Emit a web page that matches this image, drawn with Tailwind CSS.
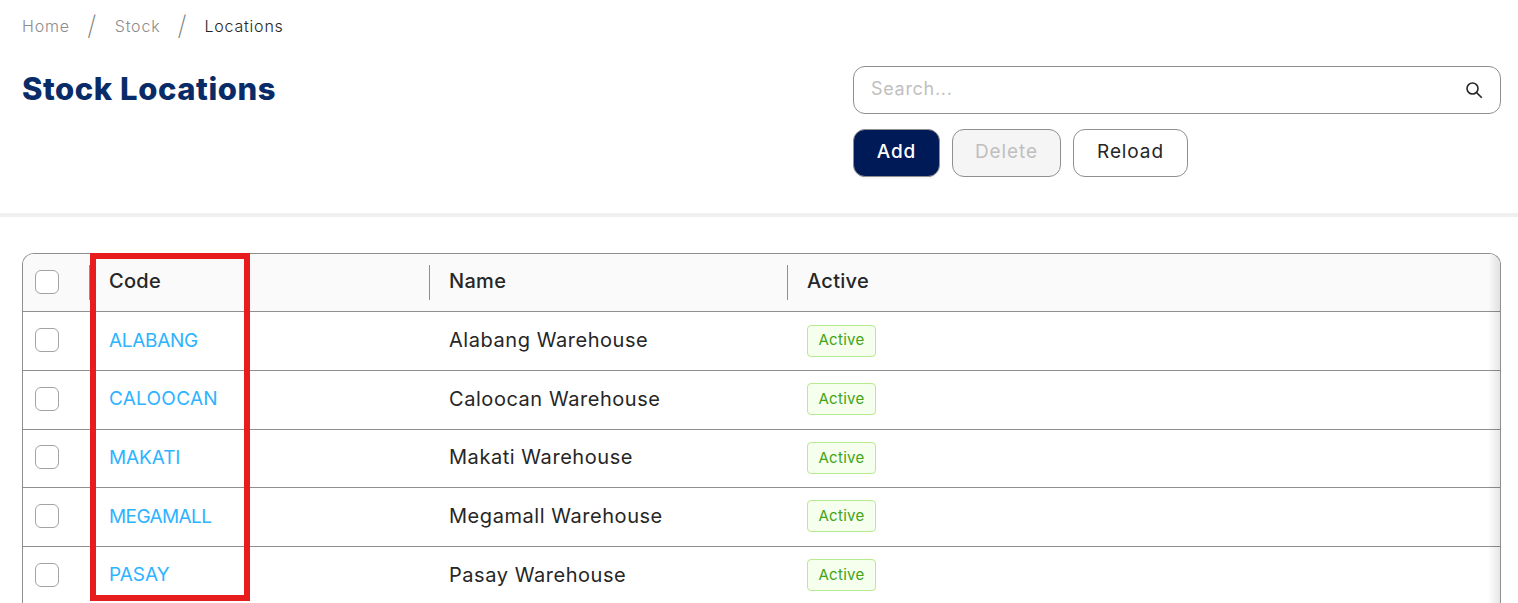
<!DOCTYPE html>
<html lang="en">
<head>
    <meta charset="UTF-8">
    <title>Stock Locations</title>
    <script src="https://cdn.jsdelivr.net/npm/@tailwindcss/browser@4"></script>
</head>
<body class="bg-white font-['Inter',sans-serif] text-[#262626] h-[603px] overflow-hidden relative">

    <!-- page header -->
    <header class="h-[217px] border-b-4 border-[#f0f0f0] px-[22px] pt-[14px]">
        <nav class="flex items-center h-6 text-[16px] font-light tracking-[0.8px]">
            <span class="text-[#8c8c8c]">Home</span>
            <span class="text-[#7f7f7f] text-[27px] font-extralight w-[45px] text-center">/</span>
            <span class="text-[#8c8c8c]">Stock</span>
            <span class="text-[#7f7f7f] text-[27px] font-extralight w-[44px] text-center">/</span>
            <span>Locations</span>
        </nav>
        <div class="flex justify-between mt-[28px]">
            <h1 class="text-[31px] leading-[46px] font-extrabold text-[#092c69] tracking-[0.55px]">Stock Locations</h1>
            <div class="w-[648px] mr-[-5px]">
                <div class="h-12 border border-[#8f8f8f] rounded-[12px] flex items-center justify-between pl-[17px] pr-[17px]">
                    <span class="text-[#bfbfbf] text-[18px] tracking-[0.7px] -mt-1">Search...</span>
                    <svg class="w-[18px] h-[18px] text-[#262626]" viewBox="0 0 18 18" fill="none" stroke="currentColor" stroke-width="1.6">
                        <circle cx="7.5" cy="7.5" r="5.5"></circle>
                        <path d="M11.6 11.6 L16.8 16.8"></path>
                    </svg>
                </div>
                <div class="flex gap-3 mt-[15px] text-[19px] tracking-[0.9px] leading-[26px]">
                    <button class="w-[87px] h-12 pb-[2px] rounded-[12px] bg-[#001a57] border border-[#8f8f8f] text-white font-medium shadow-[0_2px_0_rgba(0,0,0,0.03)]">Add</button>
                    <button class="w-[109px] h-12 pb-[2px] rounded-[12px] bg-[#f5f5f5] border border-[#8f8f8f] text-[#bfbfbf]">Delete</button>
                    <button class="w-[115px] h-12 pb-[2px] rounded-[12px] bg-white border border-[#8f8f8f]">Reload</button>
                </div>
            </div>
        </div>
    </header>

    <!-- table -->
    <div class="relative mt-9 ml-[22px] w-[1479px] border border-b-0 border-[#8f8f8f] rounded-t-[12px] overflow-hidden text-[20px] tracking-[0.55px]">
        <div class="grid grid-cols-[66px_340px_358px_1fr] items-center h-[58.4px] bg-[#fafafa] border-b border-[#8f8f8f] font-medium tracking-[0.3px]">
            <div class="pl-3 pb-[2px]"><span class="block w-6 h-6 bg-white border border-[#a3a3a3] rounded-[6px]"></span></div>
            <div class="h-[35px] border-l border-[#8f8f8f] pl-[19px] pb-[3px] flex items-center">Code</div>
            <div class="h-[35px] border-l border-[#8f8f8f] pl-[19px] pb-[3px] flex items-center">Name</div>
            <div class="h-[35px] border-l border-[#8f8f8f] pl-[19px] pb-[3px] flex items-center">Active</div>
        </div>

        <div class="grid grid-cols-[66px_340px_358px_1fr] items-center h-[58.6px] border-b border-[#8f8f8f]">
            <div class="pl-3 pb-[2px]"><span class="block w-6 h-6 bg-white border border-[#a3a3a3] rounded-[6px]"></span></div>
            <div class="pl-5 text-[19px] tracking-[-0.3px] text-[#2db3ff]">ALABANG</div>
            <div class="pl-5 pb-[2px]">Alabang Warehouse</div>
            <div class="pl-5 pb-[1px] flex"><span class="inline-flex items-center justify-center w-[69px] h-[32px] rounded-[4px] bg-[#f6ffed] border border-[#b7eb8f] text-[#3fa516] text-[15px] tracking-[0.3px]">Active</span></div>
        </div>
        <div class="grid grid-cols-[66px_340px_358px_1fr] items-center h-[58.6px] border-b border-[#8f8f8f]">
            <div class="pl-3 pb-[2px]"><span class="block w-6 h-6 bg-white border border-[#a3a3a3] rounded-[6px]"></span></div>
            <div class="pl-5 pb-[2px] text-[19px] tracking-[0.25px] text-[#2db3ff]">CALOOCAN</div>
            <div class="pl-5 pb-[2px]">Caloocan Warehouse</div>
            <div class="pl-5 pb-[1px] flex"><span class="inline-flex items-center justify-center w-[69px] h-[32px] rounded-[4px] bg-[#f6ffed] border border-[#b7eb8f] text-[#3fa516] text-[15px] tracking-[0.3px]">Active</span></div>
        </div>
        <div class="grid grid-cols-[66px_340px_358px_1fr] items-center h-[58.6px] border-b border-[#8f8f8f]">
            <div class="pl-3 pb-[2px]"><span class="block w-6 h-6 bg-white border border-[#a3a3a3] rounded-[6px]"></span></div>
            <div class="pl-5 text-[19px] tracking-[-0.1px] text-[#2db3ff]">MAKATI</div>
            <div class="pl-5 pb-[2px]">Makati Warehouse</div>
            <div class="pl-5 pb-[1px] flex"><span class="inline-flex items-center justify-center w-[69px] h-[32px] rounded-[4px] bg-[#f6ffed] border border-[#b7eb8f] text-[#3fa516] text-[15px] tracking-[0.3px]">Active</span></div>
        </div>
        <div class="grid grid-cols-[66px_340px_358px_1fr] items-center h-[58.6px] border-b border-[#8f8f8f]">
            <div class="pl-3 pb-[2px]"><span class="block w-6 h-6 bg-white border border-[#a3a3a3] rounded-[6px]"></span></div>
            <div class="pl-5 text-[19px] tracking-[-0.6px] text-[#2db3ff]">MEGAMALL</div>
            <div class="pl-5 pb-[2px]">Megamall Warehouse</div>
            <div class="pl-5 pb-[1px] flex"><span class="inline-flex items-center justify-center w-[69px] h-[32px] rounded-[4px] bg-[#f6ffed] border border-[#b7eb8f] text-[#3fa516] text-[15px] tracking-[0.3px]">Active</span></div>
        </div>
        <div class="grid grid-cols-[66px_340px_358px_1fr] items-center h-[58.6px] border-b border-[#8f8f8f]">
            <div class="pl-3 pb-[2px]"><span class="block w-6 h-6 bg-white border border-[#a3a3a3] rounded-[6px]"></span></div>
            <div class="pl-5 text-[19px] tracking-[0px] text-[#2db3ff]">PASAY</div>
            <div class="pl-5 pb-[2px]">Pasay Warehouse</div>
            <div class="pl-5 pb-[1px] flex"><span class="inline-flex items-center justify-center w-[69px] h-[32px] rounded-[4px] bg-[#f6ffed] border border-[#b7eb8f] text-[#3fa516] text-[15px] tracking-[0.3px]">Active</span></div>
        </div>

        <!-- scroll shadow on the right edge -->
        <div class="absolute top-0 right-0 bottom-0 w-3 bg-gradient-to-l from-black/10 to-transparent"></div>
    </div>

    <!-- red annotation box -->
    <div class="absolute left-[90px] top-[253px] w-[160px] h-[348px] border-[6px] border-[#e71d1d]"></div>
</body>
</html>
